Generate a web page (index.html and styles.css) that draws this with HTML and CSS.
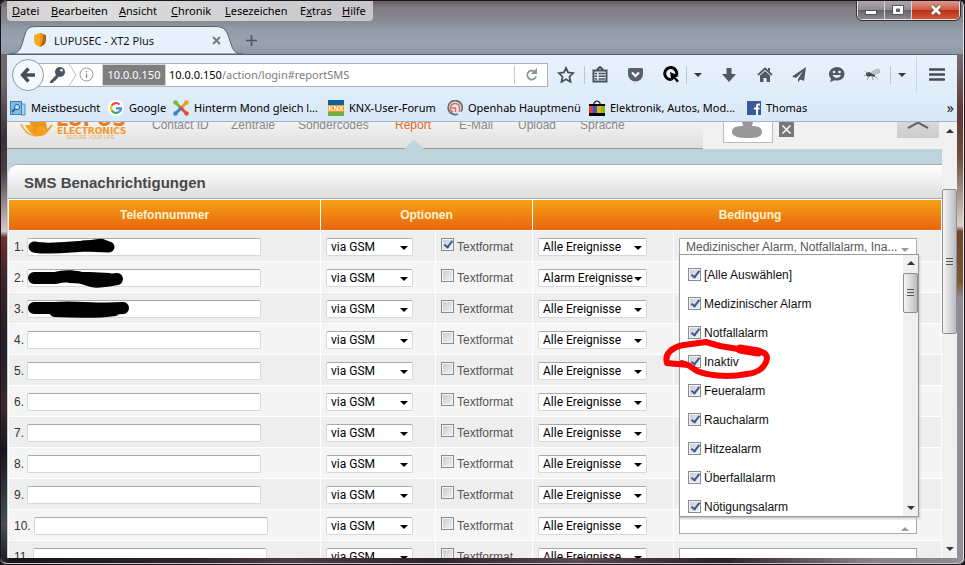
FILE: index.html
```html
<!DOCTYPE html>
<html lang="de">
<head>
<meta charset="utf-8">
<title>LUPUSEC - XT2 Plus</title>
<link rel="stylesheet" href="styles.css">
</head>
<body>
<div class="window">
  <header class="titlebar">
    <div class="menu-line">
      <nav class="menu">
        <a href="#"><u>D</u>atei</a><a href="#"><u>B</u>earbeiten</a><a href="#"><u>A</u>nsicht</a><a href="#"><u>C</u>hronik</a><a href="#"><u>L</u>esezeichen</a><a href="#">E<u>x</u>tras</a><a href="#"><u>H</u>ilfe</a>
      </nav>
      <div class="controls">
        <button aria-label="Minimieren"><svg width="14" height="12"><rect x="1.500" y="6.500" width="11" height="4" fill="#fff" stroke="#555"/></svg></button>
        <button aria-label="Maximieren"><svg width="14" height="12"><path d="M1.500 1.500h11v9h-11zM5.500 5v2.500h3V5z" fill="#fff" fill-rule="evenodd" stroke="#555"/></svg></button>
        <button class="close" aria-label="Fenster schließen"><svg width="14" height="12"><path d="M3 2l8 8M11 2l-8 8" stroke="#555" stroke-width="4"/><path d="M3 2l8 8M11 2l-8 8" stroke="#fff" stroke-width="2.500"/></svg></button>
      </div>
    </div>
    <div class="tabs">
      <div class="tab">
        <svg class="tab-shape" viewBox="0 0 234 28" preserveAspectRatio="none"><path d="M0 28C9 28 11 25 14 15C17 4 18 .5 27 .5H206C216 .5 218 5 221 15C224 25 226 28 234 28Z" fill="#e7f1fb" stroke="#59636e"/></svg>
        <svg class="shield" width="12" height="14" viewBox="0 0 12 14"><path d="M6 0l6 2v5c0 4-3 6-6 7z" fill="#a96a13"/><path d="M6 0L0 2v5c0 4 3 6 6 7z" fill="#f5ad25"/><path d="M6 0v14c2-2 3-8 3-13z" fill="#f3951a"/></svg>
        <span>LUPUSEC - XT2 Plus</span>
        <button class="tab-close" aria-label="Tab schließen"><svg width="9" height="9"><path d="M1 1l7 7M8 1L1 8" stroke="#747b82" stroke-width="2"/></svg></button>
      </div>
      <button class="new-tab" aria-label="Neuer Tab"><svg width="11" height="11"><path d="M5.500 0v11M0 5.500h11" stroke="#4b545e" stroke-width="1.600"/></svg></button>
    </div>
  </header>

  <div class="chrome">
    <div class="navbar">
      <button class="back" aria-label="Zurück"><svg width="16" height="16" viewBox="0 0 16 16"><path d="M8.500 1.500L2.500 8l6 6.500M3 8h12" fill="none" stroke="#434d58" stroke-width="3.400"/></svg></button>
      <div class="urlbar">
        <svg width="18" height="18" viewBox="0 0 18 18"><path d="M9 8L2 15.500v1.500h3.500v-2H7l3.500-4z" fill="#4b5661"/><circle cx="12" cy="6" r="5" fill="#4b5661"/><circle cx="13.500" cy="4.300" r="1.300" fill="#fff"/></svg>
        <svg class="chevron" width="9" height="22"><path d="M1 0l7 11-7 11" fill="none" stroke="#bbc0c5"/></svg>
        <svg class="info" width="15" height="15" viewBox="0 0 15 15"><circle cx="7.500" cy="7.500" r="6.500" fill="none" stroke="#9a9a9a"/><path d="M7.500 6.500V11M7.500 4v1.300" stroke="#8a8a8a" stroke-width="1.300"/></svg>
        <span class="host">10.0.0.150</span>
        <span class="url"><b>10.0.0.150</b>/action/login#reportSMS</span>
        <button class="reload" aria-label="Neu laden"><svg width="13" height="13" viewBox="0 0 13 13"><path d="M9.500 3.500A4.500 4.500 0 1 0 11 8.500" fill="none" stroke="#8b949c" stroke-width="1.800"/><path d="M12 0v6H6z" fill="#8b949c"/></svg></button>
      </div>
      <button class="tool w34" aria-label="Lesezeichen"><svg width="18" height="18" viewBox="0 0 18 18"><path d="M9 2l2.100 4.500 5 .7-3.600 3.500.9 5L9 13.300l-4.400 2.400.9-5L1.900 7.200l5-.7z" fill="none" stroke="#46525e" stroke-width="1.800"/></svg></button>
      <button class="tool w30 line" aria-label="Lesezeichenliste"><svg width="16" height="17" viewBox="0 0 16 17"><path d="M1.500 4.500h13v11h-13zM5 3.500L8 1l3 2.500" fill="none" stroke="#46525e" stroke-width="2"/><path d="M3 7.500h2M6.500 7.500H13M3 10.200h2M6.500 10.200H13M3 13h2M6.500 13H13" stroke="#46525e" stroke-width="1.400"/></svg></button>
      <button class="tool w42" aria-label="Pocket"><svg width="17" height="16" viewBox="0 0 17 16"><path d="M2.500 1h12Q16 1 16 2.500V7a7.500 7.500 0 0 1-15 0V2.500Q1 1 2.500 1z" fill="#56616c"/><path d="M5 5.500L8.500 9 12 5.500" fill="none" stroke="#fff" stroke-width="2.200"/></svg></button>
      <button class="tool w30" aria-label="Suche"><svg width="18" height="17" viewBox="0 0 18 17"><path d="M9 13.500A6 6 0 1 1 14.500 9" fill="none" stroke="#000" stroke-width="3"/><path d="M8 6l9 4-3.500 1.300L17 15l-2 1.500-3-3.800L9.500 15z" fill="#000"/></svg></button>
      <button class="tool w22 line" aria-label="Mehr"><i class="down"></i></button>
      <button class="tool w42" aria-label="Downloads"><svg width="14" height="14"><path d="M4.500 0h5v6H14l-7 8-7-8h4.500z" fill="#4f5a65"/></svg></button>
      <button class="tool w30" aria-label="Startseite"><svg width="16" height="15" viewBox="0 0 16 15"><path d="M1 8l7-6.500L15 8" fill="none" stroke="#4f5a65" stroke-width="1.800"/><path d="M3 8.500l5-4.500 5 4.500V15H9.500v-4h-3v4H3zM11 1h2v4l-2-2z" fill="#4f5a65"/></svg></button>
      <button class="tool w40" aria-label="Senden"><svg width="15" height="15"><path d="M14 0L0 9.500l4 1.500 7-7-5 8v3l2.500-2.500L12 14z" fill="#4f5a65"/></svg></button>
      <button class="tool w34" aria-label="Hello"><svg width="17" height="16" viewBox="0 0 17 16"><path d="M9 0c4 0 7.500 3 7.500 7S13 13.500 9 13.500c-1 0-1.500 0-2.500-.3L2 15l1-3.500C1.500 10.300 1 8.500 1 7c0-4 4-7 8-7z" fill="#4f5a65"/><circle cx="6" cy="5" r="1.300" fill="#e7f1fb"/><circle cx="11.500" cy="5" r="1.300" fill="#e7f1fb"/><path d="M4.500 8c2 4 6.500 4 8.500 0z" fill="#e7f1fb"/></svg></button>
      <button class="tool w34" aria-label="Firebug"><svg width="17" height="14" viewBox="0 0 17 14"><path d="M6 5L13 1l3 1-1 3-6 2z" fill="#c4c4c4" stroke="#999" stroke-width=".6"/><path d="M2 5l3-1 3 2 3 1v2l-4-1-3 1-2-2z" fill="#444"/><path d="M1 3l3 3M3 12l2-4M8 8l1 4M10 8l4 3M0 8l3-1" stroke="#888" stroke-width=".8"/></svg></button>
      <button class="tool w22 line" aria-label="Mehr"><i class="down"></i></button>
      <button class="tool main-menu" aria-label="Menü"><svg width="16" height="13"><path d="M1 1.500h14M1 6.500h14M1 11.500h14" stroke="#434d58" stroke-width="2.600" stroke-linecap="round"/></svg></button>
    </div>
    <nav class="bookmarks">
      <a href="#"><svg width="16" height="16" viewBox="0 0 16 16"><path d="M11 4h4v11h-4z" fill="#a8d4ef" stroke="#5794bd"/><rect x=".5" y="1.500" width="11" height="13" fill="#7dbde5" stroke="#4681ae"/><circle cx="7" cy="7" r="2.500" fill="#cdeafa" stroke="#285d8a"/><path d="M5 9l-3 3" stroke="#285d8a" stroke-width="1.800"/></svg>Meistbesucht</a>
      <a href="#"><svg width="16" height="16" viewBox="0 0 16 16"><circle cx="8" cy="8" r="8" fill="#fff"/><g fill="none" stroke-width="2.200"><path d="M3.700 5.500A5 5 0 0 1 11.600 4.500" stroke="#ea4335"/><path d="M3.700 5.500a5 5 0 0 0 0 5" stroke="#fbbc05"/><path d="M3.700 10.500a5 5 0 0 0 7.800 1" stroke="#34a853"/><path d="M11.500 11.500A5 5 0 0 0 13 8.300H8" stroke="#4285f4"/></g></svg>Google</a>
      <a href="#"><svg width="16" height="16" viewBox="0 0 16 16"><g fill="none" stroke-width="3"><path d="M3 3l7 7" stroke="#7ab743"/><path d="M13 3L6 10" stroke="#f59b20"/><path d="M13 13L7 7" stroke="#e84a35"/><path d="M3 13l5-5" stroke="#3f83c4"/></g><circle cx="2.500" cy="2.500" r="2.300" fill="#7ab743"/><circle cx="13.500" cy="2.500" r="2.300" fill="#f59b20"/><circle cx="13.500" cy="13.500" r="2.300" fill="#e84a35"/><circle cx="2.500" cy="13.500" r="2.300" fill="#3f83c4"/></svg>Hinterm Mond gleich l...</a>
      <a href="#"><svg width="16" height="16"><rect width="16" height="5" fill="#0962a8"/><rect y="5" width="16" height="7" fill="#f39a20"/><rect y="12" width="16" height="4" fill="#73ad3d"/><text x="8" y="11" text-anchor="middle" class="knx">KNX</text></svg>KNX-User-Forum</a>
      <a href="#"><svg width="16" height="16" viewBox="0 0 16 16"><path d="M11 14a7 7 0 1 1 3-2.500" fill="none" stroke="#666c72" stroke-width="1.700"/><path d="M6 12A4.500 4.500 0 1 1 12.500 8v4M4.500 8h4v4" fill="none" stroke="#e56b50" stroke-width="1.500"/></svg>Openhab Hauptmenü</a>
      <a href="#"><svg width="16" height="16"><path d="M5 4V3q3-4 6 0v1" fill="none" stroke="#111" stroke-width="1.200"/><rect y="4" width="16" height="12" fill="#000"/><path d="M0 6h4v7H0z" fill="#e33b36"/><path d="M4 6h4v7H4z" fill="#1f64c8"/><path d="M8 6h4v7H8z" fill="#f4af02"/><path d="M12 6h4v7h-4z" fill="#86b817"/></svg>Elektronik, Autos, Mod...</a>
      <a href="#"><svg width="14" height="14"><rect width="14" height="14" fill="#3b5998"/><path d="M13 3.500h-1.500Q10 3.500 10 5v9M7 7.500h5.500" fill="none" stroke="#fff" stroke-width="2"/></svg>Thomas</a>
      <button class="more" aria-label="Weitere Lesezeichen">»</button>
    </nav>
  </div>

  <div class="viewport">
    <main class="page">
      <header class="site-head">
        <div class="site-nav">
          <svg class="logo" width="112" height="40" viewBox="0 0 112 40"><path d="M5 20c4 7 8 11 14 11 7 0 10-4 12-12-2 4-4 6-7 6l1-5-3-4-5 1-4 5-1-6-2 4z" fill="#f6a01e"/><path d="M8 15l6-2 9 1 6-2-3 6 2 9h-2l-3-6-6 1-1 6h-3v-6z" fill="#ed941a"/><path d="M1 19c6 14 21 17 31 1" fill="none" stroke="#f6a01e" stroke-width="1.500"/><text x="36" y="21" class="logo-top">LUPUS</text><text x="37" y="29" class="logo-mid">ELECTRONICS</text><text x="46" y="34" class="logo-tag">SECURE YOUR LIFE</text></svg>
          <nav class="links"><a href="#">Contact ID</a><a href="#">Zentrale</a><a href="#">Sondercodes</a><a href="#" class="active">Report</a><a href="#">E-Mail</a><a href="#">Upload</a><a href="#">Sprache</a></nav>
        </div>
        <div class="site-user">
          <svg class="user" width="50" height="44"><path d="M.5 0v43.500h49V0" fill="#fff" stroke="#bbb"/><path d="M18 18h13l-2 9c7 0 10 2 10 6 0 5-6 6-14 6s-16-1-16-6c0-4 3-6 11-6z" fill="#999"/></svg>
          <button class="logout" aria-label="Abmelden"><svg width="15" height="15"><rect width="15" height="15" fill="#777"/><path d="M3.500 3.500l8 8M11.500 3.500l-8 8" stroke="#fff" stroke-width="1.500"/></svg></button>
          <button class="collapse" aria-label="Einklappen"><svg width="22" height="8"><path d="M1 7l10-5.500L21 7" fill="none" stroke="#666" stroke-width="2"/></svg></button>
        </div>
      </header>
      <section class="panel">
        <h1>SMS Benachrichtigungen</h1>
        <table>
          <colgroup><col class="c-phone"><col class="c-via"><col class="c-format"><col class="c-event"><col></colgroup>
          <thead><tr><th>Telefonnummer</th><th colspan="2">Optionen</th><th colspan="2" class="condition">Bedingung</th></tr></thead>
          <tbody id="rows"></tbody>
        </table>
      </section>
    </main>
    <div class="scrollbar"><i class="up"></i><div class="thumb"></div><i class="down"></i></div>
  </div>
</div>
<script src="app.js"></script>
</body>
</html>
```
FILE: styles.css
```css
* { box-sizing: border-box; }
body { margin: 0; background: #171015; font: 12px "Liberation Sans", Arial, sans-serif; color: #333; }
button { border: 0; padding: 0; margin: 0; background: none; display: flex; align-items: center; justify-content: center; font: inherit; }
a { color: inherit; text-decoration: none; }
svg { display: block; flex: none; }
input, select { font: inherit; margin: 0; }

.window {
  height: 100vh; overflow: hidden; display: flex; flex-direction: column;
  padding: 0 6px 5px 6px; border: 2px solid #dcdcdf; border-width: 1px 2px 2px 1px; border-color: #b9b6bd #e8e6ea #c9c4ca #cfc8cf;
  outline: 1px solid #1b141a; outline-offset: -1px; border-radius: 7px;
  background:
    linear-gradient(#8a8890 0, #786a6e 10%, #5f3832 20%, #70503f 28%, #cbbdb6 38%, #ddd0ca 40%, #6e452a 41%, #7b5836 50%, #8f8b96 53%, #948f9a) right / 9px 100% no-repeat,
    linear-gradient(#77727a 0, #6d6669 15%, #39323a 24%, #4a3a43 30%, #d9c9c9 41%, #6d2f27 42%, #3c2528 50%, #241f26 62%, #40282c 72%, #17171c 80%, #4a4d55 93%, #1c1c22) left / 8px 100% no-repeat,
    linear-gradient(90deg, #17151a, #30262c 20%, #4d3d42 30%, #2f2429 45%, #5a484e 60%, #2b2127 75%, #8a8088 90%, #8e8991);
}
.titlebar {
  height: 53px; flex: none; margin: 0 -6px; padding: 0 1px 0 6px; border-radius: 6px 6px 0 0;
  background: linear-gradient(#655d64 0, #847e85 8px, #858790 18px, #939eaa 30px, #98a4b0 42px, #8d98a4);
}
.menu-line { display: flex; justify-content: space-between; align-items: flex-start; height: 25px; }
.menu {
  display: grid; grid-template-columns: 39px 68px 52px 54px 75px 42px 31px; height: 20px; padding-left: 5px;
  border-radius: 0 0 4px 4px; background: linear-gradient(90deg, #cfccce, #dedede 20%, #c6c5c9); color: #000; line-height: 20px;
}
.menu, .tab, .urlbar, .bookmarks { font-family: "Noto Sans", sans-serif; font-size: 11px; }
.controls { display: flex; height: 19px; margin-right: 2px; border: 1px solid #e3e0e4; outline: 1px solid #363036; border-top: 0; border-radius: 0 0 5px 5px; overflow: hidden; }
.controls button { width: 27px; border-right: 1px solid #d7d3d8; background: linear-gradient(#aba8ad, #8f8b91 48%, #656168 50%, #8b878e); }
.controls .close { width: 47px; border: 0; background: linear-gradient(#dc9b8e, #cf5a43 48%, #b52c14 50%, #d4583a); }
.tabs { display: flex; height: 28px; }
.tab { position: relative; display: flex; align-items: center; width: 234px; margin-left: 2px; padding: 0 22px 0 25px; gap: 8px; color: #111; }
.tab > * { position: relative; }
.tab .tab-shape { position: absolute; inset: 0; width: 100%; height: 100%; }
.tab-close { margin-left: auto; }
.new-tab { width: 16px; }

.chrome { flex: none; background: linear-gradient(#e8f2fc, #d9e8f7); border-top: 1px solid #56616e; border-bottom: 1px solid #9fb6cc; }
.navbar { display: flex; align-items: center; height: 39px; padding-left: 5px; }
.back { width: 32px; height: 32px; border: 1px solid #8f9aa5; border-radius: 50%; background: #f4f9fe; z-index: 1; }
.urlbar { flex: 1; display: flex; align-items: center; height: 24px; margin-left: -12px; padding-left: 15px; background: #fff; border: 1px solid #a5b4c2; color: #7a7a7a; min-width: 0; }
.chevron { margin: 0 2px; }
.info { margin-right: 9px; }
.host { background: #7f7f7f; color: #fff; line-height: 20px; text-align: center; width: 62px; margin-right: 4px; outline: 1px solid #d5d5d5; }
.url b { color: #000; font-weight: normal; }
.reload { margin-left: auto; width: 33px; height: 18px; border-left: 1px solid #c5cdd4; }
.tool { height: 18px; flex: none; }
.w22 { width: 22px; } .w30 { width: 30px; } .w34 { width: 36px; } .w40 { width: 38px; } .w42 { width: 42px; }
.line { border-left: 1px solid #b9c6d2; }
.main-menu { width: 41px; height: 36px; margin-left: 4px; border-left: 1px solid #c7d4e1; }
.down, .up { width: 0; height: 0; border: 4px solid transparent; border-bottom: 0; border-top-color: #333c46; }
.up { border: 4px solid transparent; border-top: 0; border-bottom-color: #333; }
.bookmarks { display: grid; grid-template-columns: 98px 65px 155px 119px 142px 158px 80px 1fr; height: 27px; padding-left: 3px; align-items: center; color: #000; }
.bookmarks a { display: flex; align-items: center; gap: 5px; white-space: nowrap; }
.knx { font: bold 7px "Liberation Sans", sans-serif; fill: #fff; }
.more { justify-self: end; margin-right: 3px; font-size: 14px; color: #111; }

.viewport { flex: 1; min-height: 0; display: flex; overflow: hidden; background: #fff; }
.page { flex: 1; min-width: 0; background: #bfd3dc; }
.scrollbar { width: 15px; flex: none; display: flex; flex-direction: column; align-items: center; padding: 7px 0; background: #f0f0f0; }
.thumb { width: 100%; height: 145px; margin-top: 56px; border: 1px solid #8f8f93; border-radius: 2px; background:
  repeating-linear-gradient(#555 0 1px, transparent 1px 3px) center / 7px 8px no-repeat,
  linear-gradient(90deg, #f5f5f5, #d9dadc 50%, #b9bbc0); }
.scrollbar .down { margin-top: auto; }

.site-head { display: flex; height: 44px; margin-top: -17px; }
.site-nav { display: flex; align-items: flex-start; width: 696px; background: linear-gradient(#fff, #dfdfdf); border-bottom: 1px solid #999; }
.logo { margin-left: 13px; }
.logo-top { font: bold 19px "DejaVu Sans", sans-serif; fill: #ef7b1c; }
.logo-mid { font: bold 9px "DejaVu Sans", sans-serif; fill: #f49a1e; }
.logo-tag { font: 5px "Liberation Sans", sans-serif; fill: #f2a65c; }
.links { display: grid; grid-template-columns: 79px 67px 97px 64px 59px 62px 60px; margin-left: 20px; padding-top: 12px; line-height: 16px; color: #888; height: 43px; white-space: nowrap; }
.links .active { position: relative; color: #e8681c; }
.active::after { content: ""; position: absolute; left: 9px; top: 23px; border: 10px solid transparent; border-top: 0; border-bottom: 9px solid #bfd3dc; }
.site-user { flex: 1; display: flex; align-items: flex-start; background: #f1f1f1; }
.user { margin: -6px 0 0 20px; }
.logout { margin: 17px 0 0 6px; }
.collapse { width: 42px; height: 33px; margin: 0 3px 0 auto; padding-top: 6px; background: linear-gradient(#e6e6e6, #ccc); }

.panel { margin: 15px 0 0 1px; background: #fff; border-top: 1px solid #aaa; border-radius: 10px 0 0 0; }
h1 { margin: 0; height: 34px; padding-left: 16px; font-size: 15px; line-height: 36px; color: #484848; border-bottom: 1px solid #aaa; border-radius: 10px 0 0 0; background: linear-gradient(#fff, #dedede); }
table { width: 100%; table-layout: fixed; border-collapse: separate; border-spacing: 1px; background: #fff; }
.c-phone { width: 311px; } .c-via { width: 114px; } .c-format { width: 96px; } .c-event { width: 140px; }
th { height: 30px; padding: 0; color: #fff3cf; background: linear-gradient(#f5a116, #ea650d); }
.condition { padding-left: 26px; }
td { height: 30px; padding: 1px 5px 0; white-space: nowrap; background: #f5f5f5; }
tr:nth-child(odd) td { background: #eee; }
.field { display: flex; align-items: center; position: relative; }
.phone { width: 234px; height: 18px; margin-left: 3px; padding: 0 2px; background: #fff; border: 1px solid #d4d7dc; border-top-color: #a7a9af; border-radius: 2px; }
.scribble { position: absolute; left: 11px; top: 0; }
.select { position: relative; display: block; width: max-content; }
.select::after { content: ""; position: absolute; right: 5px; top: 8px; border: 4px solid transparent; border-bottom: 0; border-top-color: #000; pointer-events: none; }
select { appearance: none; width: 87px; height: 18px; padding: 0 0 0 4px; color: #000; background: #fff; border: 1px solid #d4d7dc; border-top-color: #a7a9af; border-radius: 2px; font-family: Roboto, sans-serif; display: block; }
.select.event select { width: 109px; }
input[type=checkbox] { appearance: none; flex: none; width: 13px; height: 13px; border: 1px solid #8b8b8b; outline: 1px solid #f4f4f4; outline-offset: -2px; background: linear-gradient(135deg, #c5cad0, #f2f2f2); position: relative; }
input[type=checkbox]:checked::after { content: ""; position: absolute; left: 4px; top: 0; width: 3px; height: 7px; border: solid #3d5596; border-width: 0 2px 2px 0; transform: rotate(38deg); }
.format { display: flex; align-items: center; gap: 3px; color: #555; }
.format input { margin-bottom: 4px; }
.multi { position: relative; width: 238px; }
.multi-box { display: flex; justify-content: space-between; align-items: center; width: 100%; height: 17px; padding: 0 6px; background: #fff; border: 1px solid #aaa; color: #555; font-family: "Liberation Sans", sans-serif; }
.multi-box i { margin: 6px 1px 0 auto; border-top-color: #999; }
.multi-box .up { border-bottom-color: #999; }
.options { position: absolute; z-index: 2; left: 0; top: 16px; width: 240px; height: 263px; display: flex; background: #fff; border: 1px solid #999; box-shadow: 1px 2px 2px #ccc; }
.options ul { flex: 1; list-style: none; margin: 0; padding: 5px 0 0 8px; height: 261px; overflow: hidden; color: #111; }
.options li { height: 29px; }
.options label { display: flex; align-items: center; gap: 3px; height: 29px; }
.options .scrollbar { padding: 6px 0; }
.options .thumb { height: 40px; margin-top: 8px; }
.mark { position: absolute; left: -20px; top: 83px; pointer-events: none; }
```
FILE: app.js
```js
const scribbles = {
  1: '<path d="M9 9C25 12 42 9 60 8S72 4 83 9M58 8L84 9" stroke-width="11"/>',
  2: '<path d="M9 9H30C40 6 52 7 60 10S70 14 92 10M45 8L84 10" stroke-width="12"/>',
  3: '<path d="M9 8H30C50 6 70 10 98 8M30 11C50 12 70 13 90 10" stroke-width="12"/>'
};
const names = ['[Alle Auswählen]', 'Medizinischer Alarm', 'Notfallalarm', 'Inaktiv', 'Feueralarm', 'Rauchalarm', 'Hitzealarm', 'Überfallalarm', 'Nötigungsalarm'];
const circle = '<svg class="mark" width="114" height="44" viewBox="0 0 114 44" fill="none" stroke="#f00" stroke-linecap="round" stroke-linejoin="round"><path d="M28 27C20 26 14 26 7 25C4 16 12 9 24 7L46 4L60 8L78 11C93 12 107 12 107 20C106 29 98 35 87 36C66 40 47 37 37 33L28 27L22 25" stroke-width="6"/><path d="M80 11l18 3" stroke-width="9"/></svg>';
const options = '<div class="options"><ul>' + names.map(n =>
  `<li><label><input type="checkbox" checked>${n}</label></li>`).join('') +
  `</ul><div class="scrollbar"><i class="up"></i><div class="thumb"></div><i class="down"></i></div>${circle}</div>`;

let html = '';
for (let n = 1; n <= 11; n++) {
  const event = n === 2 ? 'Alarm Ereignisse' : 'Alle Ereignisse';
  const mark = scribbles[n] ? `<svg class="scribble" width="110" height="20" fill="none" stroke="#000" stroke-linecap="round">${scribbles[n]}</svg>` : '';
  html += `<tr>
    <td><div class="field"><label for="p${n}">${n}.</label><input class="phone" id="p${n}" type="text">${mark}</div></td>
    <td><span class="select"><select aria-label="Übertragung ${n}"><option>via GSM</option></select></span></td>
    <td><label class="format"><input type="checkbox"${n === 1 ? ' checked' : ''}>Textformat</label></td>
    <td><span class="select event"><select aria-label="Ereignisse ${n}"><option>${event}</option></select></span></td>
    <td><div class="multi"><button class="multi-box" aria-label="Bedingung ${n}">${n === 1 ? 'Medizinischer Alarm, Notfallalarm, Ina...<i class="down"></i>' : '<i class="up"></i>'}</button>${n === 1 ? options : ''}</div></td>
  </tr>`;
}
document.getElementById('rows').innerHTML = html;
```
